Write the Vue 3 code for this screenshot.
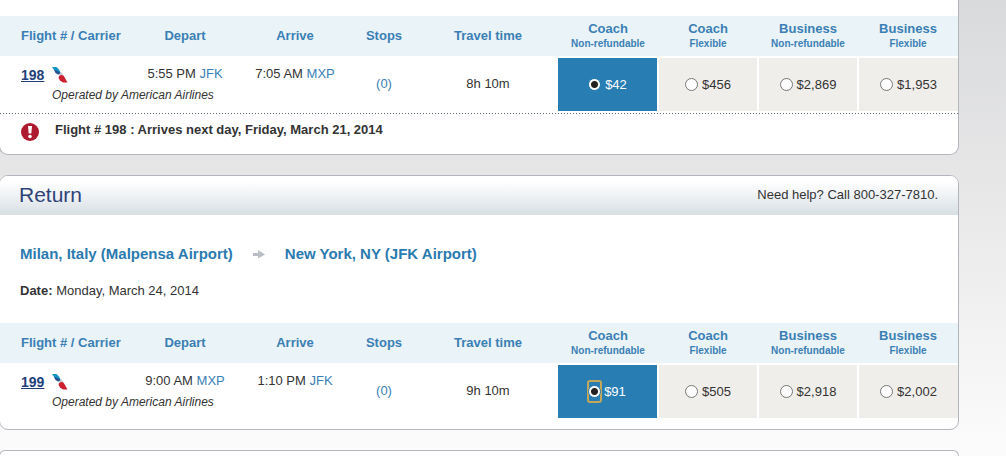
<script setup>
import { ref } from 'vue'

const fareClasses = [
  { cabin: 'Coach', rule: 'Non-refundable' },
  { cabin: 'Coach', rule: 'Flexible' },
  { cabin: 'Business', rule: 'Non-refundable' },
  { cabin: 'Business', rule: 'Flexible' },
]

const legs = [
  {
    id: 'outbound',
    number: '198',
    depart: { time: '5:55 PM', airport: 'JFK' },
    arrive: { time: '7:05 AM', airport: 'MXP' },
    duration: '8h 10m',
    fares: ['$42', '$456', '$2,869', '$1,953'],
    notice: 'Flight # 198 : Arrives next day, Friday, March 21, 2014',
  },
  {
    id: 'return',
    title: 'Return',
    from: 'Milan, Italy (Malpensa Airport)',
    to: 'New York, NY (JFK Airport)',
    date: 'Monday, March 24, 2014',
    number: '199',
    depart: { time: '9:00 AM', airport: 'MXP' },
    arrive: { time: '1:10 PM', airport: 'JFK' },
    duration: '9h 10m',
    fares: ['$91', '$505', '$2,918', '$2,002'],
    focused: 0,
  },
]

const selected = ref({ outbound: 0, return: 0 })
</script>

<template>
  <main class="page">
    <section
      v-for="leg in legs"
      :key="leg.id"
      class="card"
      :class="{ continued: !leg.title }"
    >
      <template v-if="leg.title">
        <header class="card-header">
          <h2>{{ leg.title }}</h2>
          <p>Need help? Call 800-327-7810.</p>
        </header>
        <div class="summary">
          <h3 class="route">
            <span>{{ leg.from }}</span>
            <svg width="12" height="10" viewBox="0 0 12 10" aria-hidden="true">
              <path d="M0 4h5V1l7 4.500-7 4V7H0z" fill="#b9bec4" />
            </svg>
            <span>{{ leg.to }}</span>
          </h3>
          <p class="date"><b>Date:</b> {{ leg.date }}</p>
        </div>
      </template>

      <table class="flights">
        <colgroup>
          <col />
          <col class="col-time" />
          <col class="col-time" />
          <col class="col-stops" />
          <col class="col-travel" />
          <col v-for="n in 4" :key="n" class="col-fare" />
        </colgroup>
        <thead>
          <tr>
            <th class="first">Flight # / Carrier</th>
            <th>Depart</th>
            <th>Arrive</th>
            <th>Stops</th>
            <th>Travel time</th>
            <th v-for="(f, i) in fareClasses" :key="i">
              {{ f.cabin }}<small>{{ f.rule }}</small>
            </th>
          </tr>
        </thead>
        <tbody>
          <tr>
            <td class="first carrier">
              <div class="flight">
                <a href="#">{{ leg.number }}</a>
                <svg width="16" height="16" viewBox="0 0 16 16" aria-label="American Airlines">
                  <path d="M0 0h4.500L7 2.500l1.500 3L3.500 5z" fill="#1594c4" />
                  <path d="M2 3l3 .800 3.500 1.700L9 7l-3 .500L3.500 6z" fill="#27518e" />
                  <path d="M7 7.500l2-2.500 2.500 3-3 2z" fill="#c5cbd0" />
                  <path d="M6.500 11Q6.500 8.500 9 8l2.500.500L15.500 15.500H11L8 13.500z" fill="#cc2030" />
                </svg>
              </div>
              <em>Operated by American Airlines</em>
            </td>
            <td class="time">{{ leg.depart.time }} <a href="#">{{ leg.depart.airport }}</a></td>
            <td class="time">{{ leg.arrive.time }} <a href="#">{{ leg.arrive.airport }}</a></td>
            <td><a href="#">(0)</a></td>
            <td>{{ leg.duration }}</td>
            <td
              v-for="(fare, i) in leg.fares"
              :key="i"
              class="fare"
              :class="{ chosen: selected[leg.id] === i }"
            >
              <label>
                <span class="radio" :class="{ focused: leg.focused === i }">
                  <input v-model="selected[leg.id]" type="radio" :name="leg.id" :value="i" />
                </span>
                {{ fare }}
              </label>
            </td>
          </tr>
        </tbody>
      </table>

      <div v-if="leg.notice" class="notice">
        <svg width="18" height="18" viewBox="0 0 18 18" aria-hidden="true">
          <circle cx="9" cy="9" r="9" fill="#ae1a2e" />
          <path d="M7 3h4l-.700 7.500H7.700z" fill="#fff" />
          <circle cx="9" cy="13.500" r="1.800" fill="#fff" />
        </svg>
        <strong>{{ leg.notice }}</strong>
      </div>
    </section>
    <section class="card next"></section>
  </main>
</template>

<style>
body {
  margin: 0;
}
</style>

<style scoped>
.page {
  box-sizing: border-box;
  display: flex;
  flex-direction: column;
  gap: 20px;
  min-height: 100vh;
  padding-right: 47px;
  background: linear-gradient(#d9dadc, #e6e6e7 38%, #fcfcfc);
  color: #333;
  font: 13px/16px "Liberation Sans", Arial, sans-serif;
}

a {
  color: #3a7fb5;
  text-decoration: none;
}

.card {
  margin-left: -1px;
  padding-bottom: 11px;
  border: 1px solid #b3b5bd;
  border-radius: 9px;
  background: #fff;
  overflow: hidden;
}

.continued {
  padding-top: 16px;
  border-top: 0;
  border-top-left-radius: 0;
  border-top-right-radius: 0;
}

.next {
  flex: 1;
  padding: 0;
  border-bottom: 0;
  border-bottom-left-radius: 0;
  border-bottom-right-radius: 0;
}

.card-header {
  box-sizing: border-box;
  display: flex;
  align-items: center;
  justify-content: space-between;
  height: 39px;
  padding: 0 20px 2px 19px;
  background: linear-gradient(#fff 15%, #eff2f5 50%, #d7dfe3);
}

h2,
h3,
p {
  margin: 0;
}

h2 {
  color: #2f4378;
  font-size: 21px;
  font-weight: normal;
  line-height: 24px;
}

.summary {
  padding: 30px 20px 24px;
}

.route {
  display: flex;
  align-items: center;
  gap: 20px;
  color: #2b7ab0;
  font-size: 15px;
  line-height: 18px;
}

.date {
  margin-top: 20px;
}

.flights {
  width: 100%;
  border-collapse: separate;
  border-spacing: 0;
  table-layout: fixed;
}

.col-time {
  width: 110px;
}

.col-stops {
  width: 68px;
}

.col-travel {
  width: 140px;
}

.col-fare {
  width: 100px;
}

th {
  height: 40px;
  padding: 0;
  background: #eaf3f7;
  color: #3a7fb5;
}

th small {
  display: block;
  font-size: 10px;
  line-height: 14px;
}

td {
  box-sizing: border-box;
  height: 55px;
  padding: 0;
  text-align: center;
}

.first {
  padding-left: 21px;
  text-align: left;
  white-space: nowrap;
}

.carrier,
.time {
  padding-top: 9px;
  vertical-align: top;
}

.time {
  padding-top: 10px;
}

.flight {
  display: flex;
  gap: 8px;
  height: 20px;
}

.flight a {
  color: #233f7a;
  font-size: 14px;
  font-weight: bold;
  line-height: 20px;
  text-decoration: underline;
}

.flight svg {
  margin-top: 2px;
}

.carrier em {
  display: block;
  padding-left: 31px;
  font-size: 12px;
  line-height: 20px;
}

.fare {
  border: 1px solid #fff;
  border-width: 2px 1px 0;
  background: #f0eeea;
}

.fare.chosen {
  border-left-width: 0;
  background: #287db3;
  color: #fff;
}

.fare:last-child {
  border-right-width: 0;
}

.fare label {
  display: flex;
  align-items: center;
  justify-content: center;
  gap: 4px;
}

.radio {
  display: flex;
}

.focused {
  margin: 0 -2px;
  padding: 3px 0;
  border: 2px solid #c3a75a;
  border-radius: 3px;
}

input {
  appearance: none;
  width: 13px;
  height: 13px;
  margin: 0;
  border: 1px solid #777;
  border-radius: 50%;
  background: #fff;
}

input:checked {
  border-color: #287db3;
  background: radial-gradient(circle, #222 3px, #fff 4px);
}

.focused input {
  width: 13px;
  margin: 0 -1px;
}

.notice {
  display: flex;
  align-items: flex-start;
  gap: 16px;
  margin-top: 2px;
  padding: 10px 21px 2px;
  background: repeating-linear-gradient(90deg, #5c6b7a 0 1px, #fff 1px 3px) top / 100% 1px no-repeat;
}

.notice strong {
  line-height: 14px;
}
</style>
